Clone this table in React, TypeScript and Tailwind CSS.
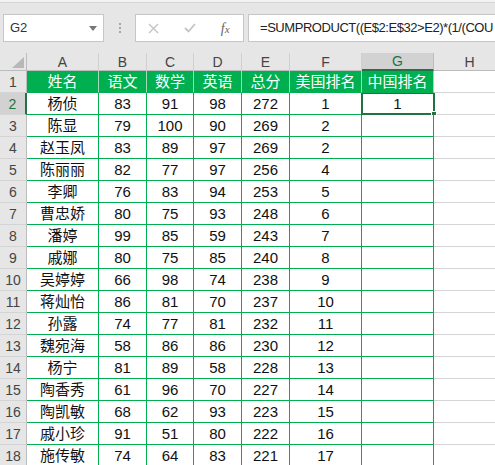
import React from "react";

const rows: string[][] = [
  ["姓名", "语文", "数学", "英语", "总分", "美国排名", "中国排名"],
  ["杨侦", "83", "91", "98", "272", "1", "1"],
  ["陈显", "79", "100", "90", "269", "2", ""],
  ["赵玉凤", "83", "89", "97", "269", "2", ""],
  ["陈丽丽", "82", "77", "97", "256", "4", ""],
  ["李卿", "76", "83", "94", "253", "5", ""],
  ["曹忠娇", "80", "75", "93", "248", "6", ""],
  ["潘婷", "99", "85", "59", "243", "7", ""],
  ["戚娜", "80", "75", "85", "240", "8", ""],
  ["吴婷婷", "66", "98", "74", "238", "9", ""],
  ["蒋灿怡", "86", "81", "70", "237", "10", ""],
  ["孙露", "74", "77", "81", "232", "11", ""],
  ["魏宛海", "58", "86", "86", "230", "12", ""],
  ["杨宁", "81", "89", "58", "228", "13", ""],
  ["陶香秀", "61", "96", "70", "227", "14", ""],
  ["陶凯敏", "68", "62", "93", "223", "15", ""],
  ["戚小珍", "91", "51", "80", "222", "16", ""],
  ["施传敏", "74", "64", "83", "221", "17", ""],
];

const cols = ["A", "B", "C", "D", "E", "F", "G", "H"];
const gridCols = "grid grid-cols-[27px_72px_48px_47px_48px_48px_72px_72px_72px] overflow-hidden";
const font = { fontFamily: '"Liberation Sans", "Noto Sans CJK SC", sans-serif' };

export default function App() {
  return (
    <div className="w-[495px] h-[465px] overflow-hidden bg-[#e6e6e6] relative" style={font}>
      {/* top strip */}
      <div className="h-[3px] bg-[#f3f2f1] border-b border-[#d6d6d6]" />
      {/* formula bar */}
      <div className="h-[50px] flex items-start pt-[11px] pl-[3px]">
        <div className="w-[101px] h-[28px] bg-white border border-[#c6c6c6] flex items-center justify-between pl-[6px] pr-[6px]">
          <span className="text-[13px] text-[#333]">G2</span>
          <svg width="8" height="5" viewBox="0 0 8 5">
            <path d="M0 0 L8 0 L4 5 Z" fill="#777" />
          </svg>
        </div>
        <div className="w-[31px] h-[28px] flex flex-col items-center justify-center gap-[2px]">
          <div className="w-[2px] h-[2px] bg-[#a6a6a6]" />
          <div className="w-[2px] h-[2px] bg-[#a6a6a6]" />
          <div className="w-[2px] h-[2px] bg-[#a6a6a6]" />
        </div>
        <div className="w-[109px] h-[28px] bg-white border border-[#c6c6c6] flex items-center">
          <div className="w-[36px] flex justify-center">
            <svg width="11" height="11" viewBox="0 0 11 11">
              <path d="M1 1 L10 10 M10 1 L1 10" stroke="#c4c4c4" strokeWidth="1.4" />
            </svg>
          </div>
          <div className="w-[36px] flex justify-center">
            <svg width="12" height="10" viewBox="0 0 12 10">
              <path d="M1 5 L4.5 8.5 L11 1" stroke="#c4c4c4" strokeWidth="1.8" fill="none" />
            </svg>
          </div>
          <div className="w-[36px] flex justify-center">
            <span className="text-[14px] italic text-[#666]" style={{ fontFamily: '"Liberation Serif", serif' }}>
              f<span className="text-[11px]">x</span>
            </span>
          </div>
        </div>
        <div className="ml-[4px] flex-1 h-[28px] bg-white border border-[#c6c6c6] border-r-0 flex items-center pl-[11px] overflow-hidden whitespace-nowrap">
          <span className="text-[13px] text-[#222] tracking-[-0.45px]">
            =SUMPRODUCT((E$2:E$32&gt;E2)*(1/(COU
          </span>
        </div>
      </div>
      {/* column headers */}
      <div className={`${gridCols} h-[18px] grid-rows-[18px]`}>
        <div className="bg-[#e6e6e6] border-r border-b border-[#bcbcbc] relative">
          <svg className="absolute left-[12px] top-[4px]" width="12" height="11" viewBox="0 0 12 11">
            <path d="M12 0 L12 11 L0 11 Z" fill="#b8b8b8" />
          </svg>
        </div>
        {cols.map((c) =>
          c === "G" ? (
            <div key={c} className="bg-[#d2d2d2] border-r border-[#bcbcbc] border-b-2 border-b-[#217346] flex items-center justify-center text-[14px] leading-none text-[#217346]">
              {c}
            </div>
          ) : (
            <div key={c} className="bg-[#e6e6e6] border-r border-[#d0d0d0] border-b border-b-[#bcbcbc] flex items-center justify-center text-[14px] leading-none text-[#444]">
              {c}
            </div>
          )
        )}
      </div>
      {/* data rows */}
      {rows.map((r, i) => {
        const rowNum = i + 1;
        const selRow = rowNum === 2;
        return (
          <div key={i} className={`${gridCols} h-[22px] grid-rows-[22px]`}>
            <div
              className={
                selRow
                  ? "bg-[#d2d2d2] border-r-2 border-r-[#217346] border-b border-b-[#d4d4d4] flex items-center justify-center text-[14px] leading-none text-[#217346]"
                  : "bg-[#e6e6e6] border-r border-r-[#bcbcbc] border-b border-b-[#d4d4d4] flex items-center justify-center text-[14px] leading-none text-[#444]"
              }
            >
              {rowNum}
            </div>
            {r.map((v, j) =>
              i === 0 ? (
                <div key={j} className="bg-[#00b050] border-r border-r-[#9fdcb6] border-b border-b-[#00b050] flex items-center justify-center text-[15px] leading-none text-white whitespace-nowrap">
                  {v}
                </div>
              ) : (
                <div key={j} className="bg-white border-r border-b border-[#00b050] flex items-center justify-center text-[15px] leading-none text-[#111] whitespace-nowrap relative">
                  {v}
                  {selRow && j === 6 && (
                    <div className="absolute -left-[1px] -top-[1px] w-[74px] h-[23px] border-2 border-[#217346]">
                      <div className="absolute -right-[4px] -bottom-[4px] w-[6px] h-[6px] bg-[#217346] border border-white" />
                    </div>
                  )}
                </div>
              )
            )}
            <div className="bg-white border-b border-[#d4d4d4]" />
            <div className="bg-white border-b border-[#d4d4d4]" />
          </div>
        );
      })}
    </div>
  );
}
